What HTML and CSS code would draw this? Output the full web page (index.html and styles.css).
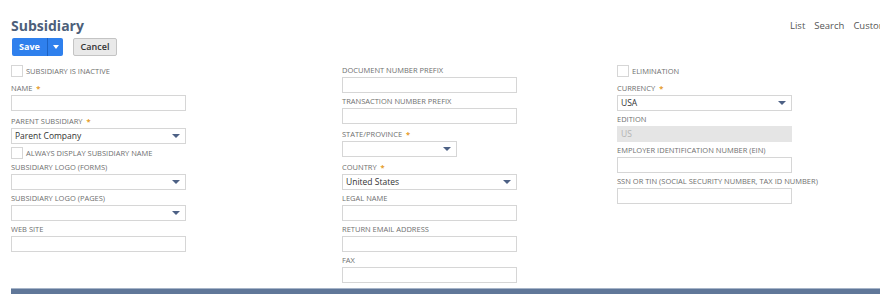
FILE: index.html
```html
<!DOCTYPE html>
<html lang="en">
<head>
    <meta charset="UTF-8">
    <title>Subsidiary</title>
    <link rel="stylesheet" href="styles.css">
</head>
<body>
    <div class="janela">
    <div class="pagina">
        <div class="topo">
            <h1>Subsidiary</h1>
            <div class="links">
                <span>List</span>
                <span>Search</span>
                <span>Customize</span>
            </div>
        </div>
        <div class="botoes">
            <div class="salvar">
                <span class="salvar-texto">Save</span>
                <span class="salvar-menu">
                    <svg width="6" height="4" viewBox="0 0 6 4"><path d="M0 0H6L3 4Z" fill="#fff"/></svg>
                </span>
            </div>
            <div class="cancelar">Cancel</div>
        </div>

        <div class="colunas">
            <div class="coluna">
                <label class="check"><span class="caixa"></span>SUBSIDIARY IS INACTIVE</label>
                <div class="campo">
                    <div class="rotulo req">NAME <span class="obrig">*</span></div>
                    <div class="entrada"></div>
                </div>
                <div class="campo">
                    <div class="rotulo req">PARENT SUBSIDIARY <span class="obrig">*</span></div>
                    <div class="entrada lista">Parent Company<i class="seta"></i></div>
                </div>
                <label class="check check-meio"><span class="caixa"></span>ALWAYS DISPLAY SUBSIDIARY NAME</label>
                <div class="campo">
                    <div class="rotulo">SUBSIDIARY LOGO (FORMS)</div>
                    <div class="entrada lista"><i class="seta"></i></div>
                </div>
                <div class="campo">
                    <div class="rotulo">SUBSIDIARY LOGO (PAGES)</div>
                    <div class="entrada lista"><i class="seta"></i></div>
                </div>
                <div class="campo">
                    <div class="rotulo">WEB SITE</div>
                    <div class="entrada"></div>
                </div>
            </div>

            <div class="coluna">
                <div class="campo">
                    <div class="rotulo">DOCUMENT NUMBER PREFIX</div>
                    <div class="entrada"></div>
                </div>
                <div class="campo">
                    <div class="rotulo">TRANSACTION NUMBER PREFIX</div>
                    <div class="entrada"></div>
                </div>
                <div class="campo">
                    <div class="rotulo req">STATE/PROVINCE <span class="obrig">*</span></div>
                    <div class="entrada lista curta"><i class="seta"></i></div>
                </div>
                <div class="campo">
                    <div class="rotulo req">COUNTRY <span class="obrig">*</span></div>
                    <div class="entrada lista">United States<i class="seta"></i></div>
                </div>
                <div class="campo">
                    <div class="rotulo">LEGAL NAME</div>
                    <div class="entrada"></div>
                </div>
                <div class="campo">
                    <div class="rotulo">RETURN EMAIL ADDRESS</div>
                    <div class="entrada"></div>
                </div>
                <div class="campo">
                    <div class="rotulo">FAX</div>
                    <div class="entrada"></div>
                </div>
            </div>

            <div class="coluna">
                <label class="check"><span class="caixa"></span>ELIMINATION</label>
                <div class="campo">
                    <div class="rotulo req">CURRENCY <span class="obrig">*</span></div>
                    <div class="entrada lista">USA<i class="seta"></i></div>
                </div>
                <div class="campo">
                    <div class="rotulo">EDITION</div>
                    <div class="entrada inativa">US</div>
                </div>
                <div class="campo">
                    <div class="rotulo">EMPLOYER IDENTIFICATION NUMBER (EIN)</div>
                    <div class="entrada"></div>
                </div>
                <div class="campo">
                    <div class="rotulo">SSN OR TIN (SOCIAL SECURITY NUMBER, TAX ID NUMBER)</div>
                    <div class="entrada"></div>
                </div>
            </div>
        </div>

        <div class="barra"></div>
    </div>
    </div>
</body>
</html>
```

FILE: styles.css
```css
:root {
    --cor-titulo: #4d5f7a;
    --cor-rotulo: #6f6f6f;
    --cor-borda: #d6d6d6;
    --cor-azul: #2f80ed;
}
body {
    margin: 0;
    font-family: 'Open Sans', 'Liberation Sans', sans-serif;
    background: white;
    overflow: hidden;
}
.janela {
    width: 880px;
    overflow: hidden;
}
.pagina {
    padding: 13px 0 0 11px;
    width: 869px;
}
.topo {
    display: flex;
    align-items: center;
    height: 24px;
}
h1 {
    margin: 0;
    font-size: 14px;
    font-weight: 700;
    color: var(--cor-titulo);
    flex: 1;
}
.links {
    display: flex;
    gap: 9px;
    font-size: 9.5px;
    color: #555;
    width: 90px;
    flex: none;
    white-space: nowrap;
}
.botoes {
    display: flex;
    gap: 10px;
    margin-top: 1px;
    margin-left: 1px;
}
.salvar {
    display: flex;
    height: 18px;
    background: var(--cor-azul);
    border-radius: 2px;
    color: white;
    font-size: 9px;
    font-weight: 700;
}
.salvar-texto {
    width: 35px;
    line-height: 18px;
    text-align: center;
}
.salvar-menu {
    width: 15px;
    border-left: 1px solid #1d63c4;
    display: flex;
    align-items: center;
    justify-content: center;
}
.cancelar {
    height: 16px;
    width: 42px;
    line-height: 16px;
    text-align: center;
    font-size: 9px;
    font-weight: 600;
    color: #333;
    background: #e9e9e9;
    border: 1px solid #c4c4c4;
    border-radius: 2px;
}
.colunas {
    display: grid;
    grid-template-columns: 331px 275px 180px;
    margin-top: 9px;
}
.coluna {
    display: flex;
    flex-direction: column;
}
.campo {
    width: 175px;
    margin-bottom: 4px;
}
.rotulo {
    font-size: 7.5px;
    line-height: 9px;
    color: var(--cor-rotulo);
    margin-bottom: 2px;
    white-space: nowrap;
}
.req {
    padding-top: 2px;
}
.obrig {
    color: #e59a25;
    font-weight: 700;
    margin-left: 2px;
}
.entrada {
    position: relative;
    height: 14px;
    border: 1px solid var(--cor-borda);
    font-size: 8.5px;
    line-height: 14px;
    padding: 0 3px;
    color: #333;
}
.curta {
    width: 107px;
}
.inativa {
    background: #e5e5e5;
    border-color: #e5e5e5;
    color: #b3b3b3;
}
.seta {
    position: absolute;
    right: 5px;
    top: 5px;
    width: 0;
    height: 0;
    border-left: 4px solid transparent;
    border-right: 4px solid transparent;
    border-top: 4px solid #4d6185;
}
.check {
    display: flex;
    align-items: center;
    gap: 3px;
    height: 12px;
    font-size: 7.5px;
    color: var(--cor-rotulo);
    margin-bottom: 5px;
}
.check-meio {
    margin-top: -1px;
    margin-bottom: 4px;
}
.caixa {
    width: 10px;
    height: 10px;
    border: 1px solid var(--cor-borda);
    background: white;
}
.coluna:nth-child(2) .campo:first-child {
    margin-top: 1px;
}
.barra {
    margin-top: 1px;
    height: 5px;
    background: #607799;
    border-top: 1px solid #a6b4c8;
    width: 869px;
}
```
